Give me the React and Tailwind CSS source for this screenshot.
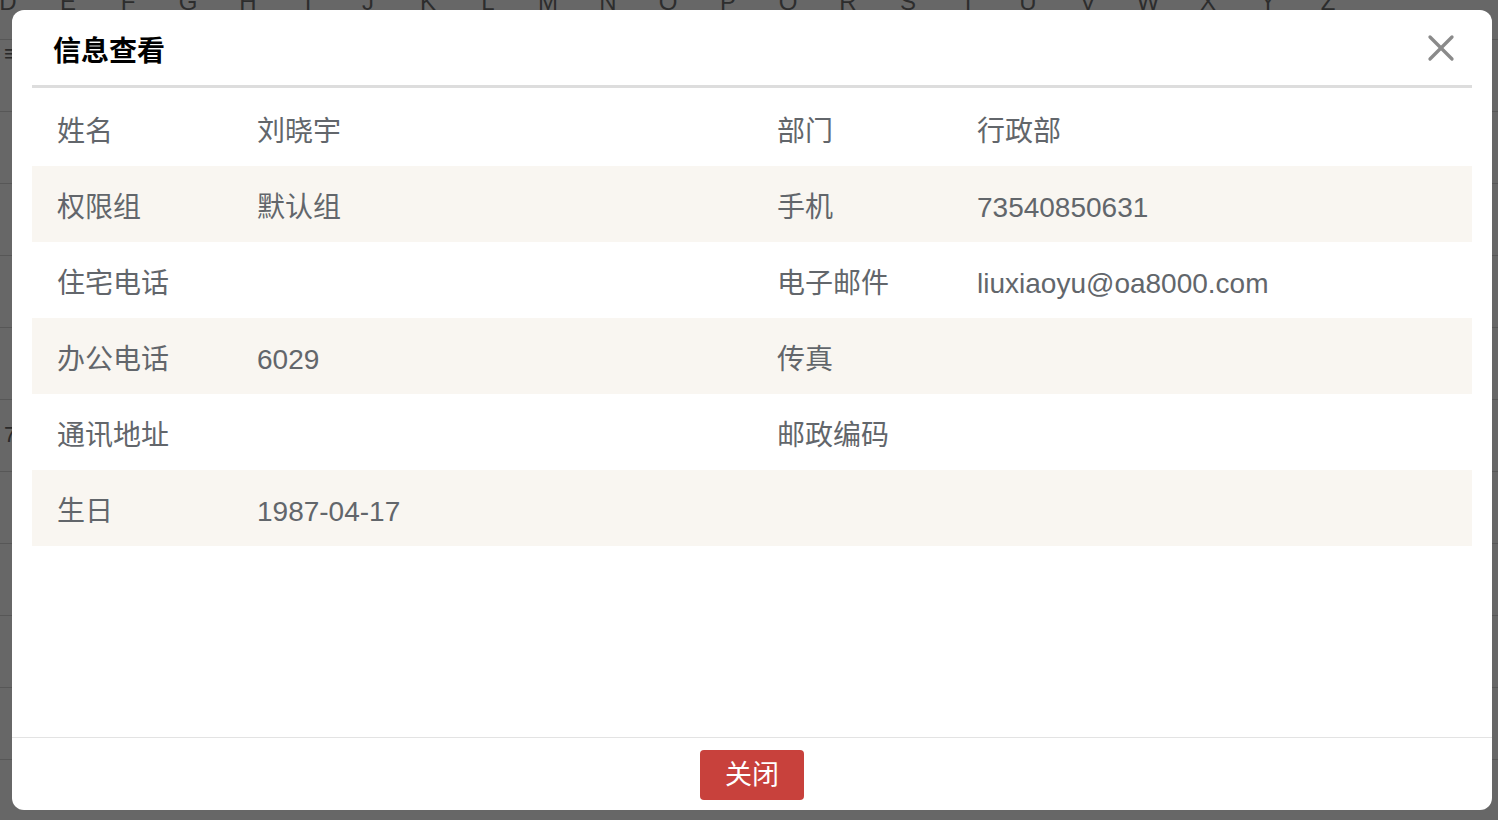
import { X } from "lucide-react";

const letters = "DEFGHIJKLMNOPQRSTUVWXYZ".split("");

const rows = [
  ["姓名", "刘晓宇", "部门", "行政部"],
  ["权限组", "默认组", "手机", "73540850631"],
  ["住宅电话", "", "电子邮件", "liuxiaoyu@oa8000.com"],
  ["办公电话", "6029", "传真", ""],
  ["通讯地址", "", "邮政编码", ""],
  ["生日", "1987-04-17", "", ""],
];

function Backdrop() {
  return (
    <div className="absolute inset-0 bg-[#676767] overflow-hidden">
      {/* alphabet strip behind the dialog */}
      <div className="flex h-[10px] items-end overflow-hidden">
        <div className="flex -ml-[22px] leading-none">
          {letters.map((l) => (
            <span key={l} className="w-[60px] text-center text-[24px] text-[#2d2d2d] -mb-[4px]">
              {l}
            </span>
          ))}
        </div>
      </div>
      <div className="h-[30px] border-b border-[#575757]" />
      {[0, 1, 2, 3, 4, 5, 6, 7, 8, 9].map((i) => (
        <div key={i} className="h-[72px] border-b border-[#575757] pl-[4px] text-[22px] text-[#2a2a2a] flex items-center">
          {i === 0 ? <span className="-mt-[44px]">≡</span> : i === 5 ? <span className="-mt-[2px]">7</span> : null}
        </div>
      ))}
    </div>
  );
}

function App() {
  return (
    <div
      className="relative w-[1498px] h-[820px] overflow-hidden"
      style={{ fontFamily: '"Liberation Sans", "Noto Sans CJK SC", sans-serif' }}
    >
      <Backdrop />

      <div className="absolute left-[12px] top-[10px] w-[1480px] h-[800px] bg-white rounded-[12px] flex flex-col">
        <div className="px-5 flex-1">
          <div className="h-[78px] flex items-center justify-between pl-[21px] pr-[9px] border-b-[3px] border-[#dddddd]">
            <h2 className="text-[28px] font-bold text-black pt-[8px]">信息查看</h2>
            <X className="text-[#8a8a8a]" size={44} strokeWidth={1.8} />
          </div>

          <div className="mt-[2px]">
            {rows.map((r, i) => (
              <div
                key={i}
                className={`grid grid-cols-[200px_520px_200px_520px] h-[76px] items-center text-[28px] text-[#62666b] ${
                  i % 2 === 1 ? "bg-[#f9f6f1]" : "bg-white"
                }`}
              >
                {r.map((c, j) => (
                  <div key={j} className="px-[25px] pt-[8px] whitespace-nowrap">
                    {c}
                  </div>
                ))}
              </div>
            ))}
          </div>
        </div>

        <div className="h-[73px] border-t border-[#e3e3e3] flex justify-center pt-[12px]">
          <button className="w-[104px] h-[50px] rounded-[4px] bg-[#c8413c] text-white text-[27px]">
            关闭
          </button>
        </div>
      </div>
    </div>
  );
}

export default App;
